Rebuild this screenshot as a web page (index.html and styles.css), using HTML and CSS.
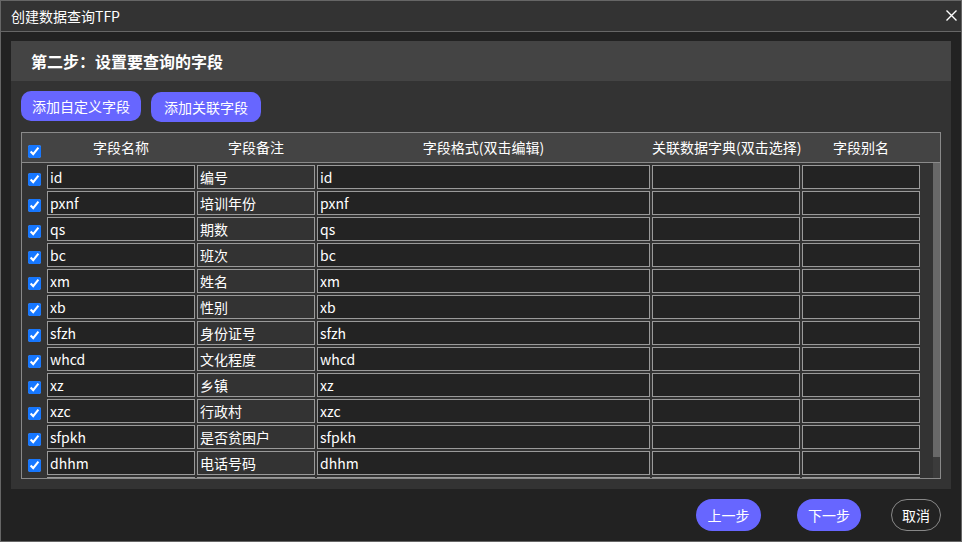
FILE: index.html
```html
<!DOCTYPE html>
<html lang="zh-CN">
<head>
<meta charset="utf-8">
<title>创建数据查询TFP</title>
<link rel="stylesheet" href="styles.css">
</head>
<body>
<div class="window">
  <div class="titlebar">
    <span class="title">创建数据查询TFP</span>
    <span class="close" aria-label="关闭">
      <svg width="11" height="11" viewBox="0 0 11 11"><path d="M0.5 0.5 L10.5 10.5 M10.5 0.5 L0.5 10.5" stroke="#fff" stroke-width="1.4" fill="none"/></svg>
    </span>
  </div>
  <div class="content">
    <div class="panel">
      <div class="panel-head">第二步：设置要查询的字段</div>
      <div class="panel-body">
        <div class="toolbar">
          <button class="btn btn-add1">添加自定义字段</button>
          <button class="btn btn-add2">添加关联字段</button>
        </div>
        <div class="table">
          <div class="thead">
            <input type="checkbox" class="cb cb-head" checked>
            <div class="th">字段名称</div>
            <div class="th">字段备注</div>
            <div class="th">字段格式(双击编辑)</div>
            <div class="th">关联数据字典(双击选择)</div>
            <div class="th">字段别名</div>
          </div>
          <div class="tbody">
            <div class="rows">
              <div class="row"><input type="checkbox" class="cb" checked><div class="cell">id</div><div class="cell ro">编号</div><div class="cell">id</div><div class="cell"></div><div class="cell"></div></div>
              <div class="row"><input type="checkbox" class="cb" checked><div class="cell">pxnf</div><div class="cell ro">培训年份</div><div class="cell">pxnf</div><div class="cell"></div><div class="cell"></div></div>
              <div class="row"><input type="checkbox" class="cb" checked><div class="cell">qs</div><div class="cell ro">期数</div><div class="cell">qs</div><div class="cell"></div><div class="cell"></div></div>
              <div class="row"><input type="checkbox" class="cb" checked><div class="cell">bc</div><div class="cell ro">班次</div><div class="cell">bc</div><div class="cell"></div><div class="cell"></div></div>
              <div class="row"><input type="checkbox" class="cb" checked><div class="cell">xm</div><div class="cell ro">姓名</div><div class="cell">xm</div><div class="cell"></div><div class="cell"></div></div>
              <div class="row"><input type="checkbox" class="cb" checked><div class="cell">xb</div><div class="cell ro">性别</div><div class="cell">xb</div><div class="cell"></div><div class="cell"></div></div>
              <div class="row"><input type="checkbox" class="cb" checked><div class="cell">sfzh</div><div class="cell ro">身份证号</div><div class="cell">sfzh</div><div class="cell"></div><div class="cell"></div></div>
              <div class="row"><input type="checkbox" class="cb" checked><div class="cell">whcd</div><div class="cell ro">文化程度</div><div class="cell">whcd</div><div class="cell"></div><div class="cell"></div></div>
              <div class="row"><input type="checkbox" class="cb" checked><div class="cell">xz</div><div class="cell ro">乡镇</div><div class="cell">xz</div><div class="cell"></div><div class="cell"></div></div>
              <div class="row"><input type="checkbox" class="cb" checked><div class="cell">xzc</div><div class="cell ro">行政村</div><div class="cell">xzc</div><div class="cell"></div><div class="cell"></div></div>
              <div class="row"><input type="checkbox" class="cb" checked><div class="cell">sfpkh</div><div class="cell ro">是否贫困户</div><div class="cell">sfpkh</div><div class="cell"></div><div class="cell"></div></div>
              <div class="row"><input type="checkbox" class="cb" checked><div class="cell">dhhm</div><div class="cell ro">电话号码</div><div class="cell">dhhm</div><div class="cell"></div><div class="cell"></div></div>
              <div class="row"><span class="cb-slot"></span><div class="cell"></div><div class="cell ro"></div><div class="cell"></div><div class="cell"></div><div class="cell"></div></div>
            </div>
            <div class="scrollbar"><div class="thumb"></div></div>
          </div>
        </div>
      </div>
    </div>
  </div>
  <div class="footer">
    <button class="btn btn-prev">上一步</button>
    <button class="btn btn-next">下一步</button>
    <button class="btn-cancel">取消</button>
  </div>
</div>
</body>
</html>
```
FILE: styles.css
```css
* { box-sizing: border-box; }
html, body { margin: 0; padding: 0; background: #222; }
body {
  font-family: "Noto Sans CJK SC", "Microsoft YaHei", sans-serif;
  color: #fff;
}
.window {
  width: 962px;
  height: 542px;
  border: 1px solid #666;
  background: #222;
  display: flex;
  flex-direction: column;
}
.titlebar {
  height: 31px;
  flex: none;
  background: #333;
  border-bottom: 1px solid #666;
  display: flex;
  align-items: center;
  padding-left: 10px;
  padding-right: 4px;
}
.title {
  font-size: 14px;
  line-height: 30px;
  flex: 1;
}
.close {
  display: flex;
  width: 11px;
  height: 11px;
  margin-top: -2px;
}
.content {
  padding: 9px 10px 0 10px;
  flex: none;
}
.panel {
  height: 448px;
  display: flex;
  flex-direction: column;
}
.panel-head {
  height: 40px;
  background: #444;
  font-size: 16px;
  font-weight: bold;
  line-height: 40px;
  padding-left: 20px;
}
.panel-body {
  flex: 1;
  background: #333;
  padding: 10px;
}
.toolbar {
  display: flex;
  gap: 10px;
  height: 30px;
  margin-bottom: 11px;
}
.btn {
  background: #6766ff;
  color: #fff;
  border: none;
  font-family: inherit;
  font-size: 14px;
  padding: 0;
  cursor: pointer;
}
.btn-add1 { width: 120px; height: 30px; border-radius: 10px; }
.btn-add2 { width: 110px; height: 30px; border-radius: 10px; margin-top: 1px; }
.table {
  border: 1px solid #8a8a8a;
}
.thead, .row {
  display: grid;
  grid-template-columns: 23px 148px 118px 333px 148px 118px;
  column-gap: 2px;
}
.thead {
  height: 30px;
  background: #444;
  border-bottom: 1px solid #8a8a8a;
}
.th {
  font-size: 14px;
  line-height: 29px;
  text-align: center;
  white-space: nowrap;
}
.cb {
  width: 13px;
  height: 13px;
  margin: 0 0 0 6px;
  accent-color: #1677ff;
  align-self: start;
}
.cb-head { margin-top: 12px; }
.tbody {
  height: 315px;
  display: flex;
  background: #333;
}
.rows {
  flex: 1;
  overflow: hidden;
}
.scrollbar {
  width: 7px;
  flex: none;
  background: #3b3b3b;
}
.thumb {
  height: 294px;
  background: #686868;
}
.row {
  height: 26px;
  padding-top: 2px;
}
.row .cb { margin-top: 8px; }
.cell {
  height: 24px;
  border: 1px solid #9a9a9a;
  background: #232323;
  font-size: 14px;
  line-height: 22px;
  padding-left: 2px;
  white-space: nowrap;
  overflow: hidden;
}
.cell.ro { background: #333; }
.footer {
  display: flex;
  justify-content: flex-end;
  align-items: flex-start;
  padding: 10px 20px 0 0;
}
.btn-prev { width: 65px; height: 32px; border-radius: 16px; margin-right: 36px; }
.btn-next { width: 64px; height: 32px; border-radius: 16px; margin-right: 30px; }
.btn-cancel {
  width: 50px;
  height: 32px;
  border-radius: 16px;
  border: 1px solid #888;
  background: transparent;
  color: #fff;
  font-family: inherit;
  font-size: 14px;
  padding: 0;
}
```
